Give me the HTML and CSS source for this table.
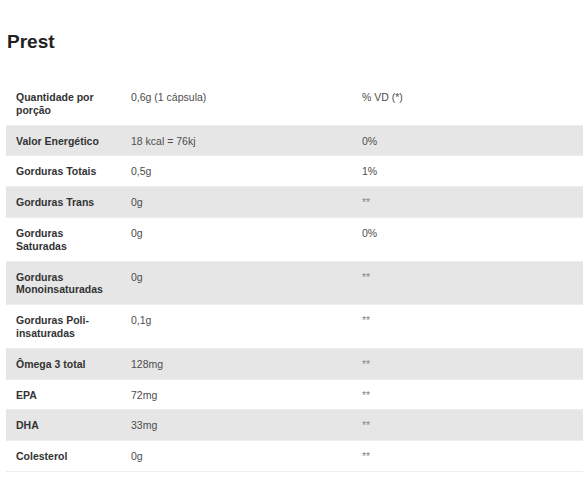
FILE: index.html
```html
<!DOCTYPE html>
<html lang="pt">
<head>
<meta charset="utf-8">
<title>Prest</title>
<link rel="stylesheet" href="styles.css">
</head>
<body>
<div class="page">
  <h1 class="title">Prest</h1>
  <table class="nutri">
    <colgroup>
      <col class="c1"><col class="c2"><col class="c3">
    </colgroup>
    <tbody>
      <tr><th>Quantidade por porção</th><td>0,6g (1 cápsula)</td><td>% VD (*)</td></tr>
      <tr class="alt"><th>Valor Energético</th><td>18 kcal = 76kj</td><td>0%</td></tr>
      <tr><th>Gorduras Totais</th><td>0,5g</td><td>1%</td></tr>
      <tr class="alt"><th>Gorduras Trans</th><td>0g</td><td class="na">**</td></tr>
      <tr><th>Gorduras<br>Saturadas</th><td>0g</td><td>0%</td></tr>
      <tr class="alt"><th>Gorduras<br>Monoinsaturadas</th><td>0g</td><td class="na">**</td></tr>
      <tr><th>Gorduras Poli-<br>insaturadas</th><td>0,1g</td><td class="na">**</td></tr>
      <tr class="alt"><th>Ômega 3 total</th><td>128mg</td><td class="na">**</td></tr>
      <tr><th>EPA</th><td>72mg</td><td class="na">**</td></tr>
      <tr class="alt"><th>DHA</th><td>33mg</td><td class="na">**</td></tr>
      <tr><th>Colesterol</th><td>0g</td><td class="na">**</td></tr>
    </tbody>
  </table>
</div>
</body>
</html>
```
FILE: styles.css
```css
html, body {
  margin: 0;
  padding: 0;
  background: #fff;
}
body {
  font-family: "Liberation Sans", Arial, sans-serif;
  color: #333;
}
.page {
  padding: 31px 5px 0 6px;
}
.title {
  margin: 0 0 29px 1px;
  font-size: 19px;
  line-height: 22px;
  font-weight: bold;
  color: #222;
}
.nutri {
  width: 577px;
  border-collapse: collapse;
  table-layout: fixed;
  font-size: 10.5px;
  line-height: 12.8px;
}
.c1 { width: 115px; }
.c2 { width: 231px; }
.c3 { width: 231px; }
.nutri th,
.nutri td {
  padding: 9px 10px 8px;
  text-align: left;
  vertical-align: top;
  border-bottom: 1px solid #ececec;
}
.nutri th {
  font-weight: bold;
  color: #333;
}
.nutri td {
  font-weight: normal;
  color: #4d4d4d;
}
.nutri td.na {
  color: #888;
}
.nutri tr.alt th,
.nutri tr.alt td {
  background: #e6e6e6;
}
```
